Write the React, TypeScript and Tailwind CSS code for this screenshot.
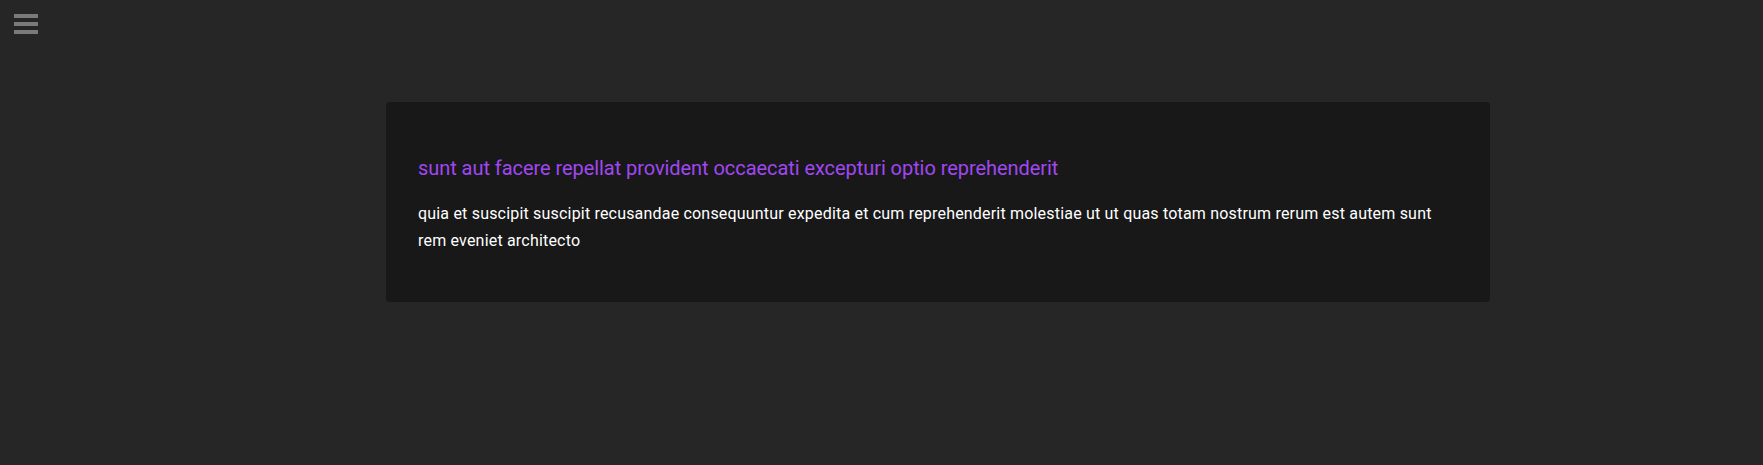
export default function App() {
  return (
    <div className="min-h-[465px] w-full bg-[#262626]" style={{ fontFamily: "Roboto, 'Liberation Sans', sans-serif" }}>
      <div className="flex h-[48px] items-start pl-[14px] pt-[14px]">
        <button className="flex flex-col gap-[4px]" aria-label="menu">
          <span className="block h-[4px] w-[24px] bg-[#7a7a7a]" />
          <span className="block h-[4px] w-[24px] bg-[#7a7a7a]" />
          <span className="block h-[4px] w-[24px] bg-[#7a7a7a]" />
        </button>
      </div>
      <div className="ml-[386px] mt-[54px] w-[1104px] rounded bg-[#181818] px-8 pb-[48px] pt-[52px]">
        <h2 className="text-[20px] leading-[28px] tracking-[-0.06px] text-[#a147f2]">
          sunt aut facere repellat provident occaecati excepturi optio reprehenderit
        </h2>
        <p className="mt-[18px] text-[16px] leading-[27px] tracking-[0.19px] text-white">
          <span className="block whitespace-nowrap">
            quia et suscipit suscipit recusandae consequuntur expedita et cum reprehenderit molestiae ut ut quas totam nostrum rerum est autem sunt
          </span>
          <span className="block whitespace-nowrap">rem eveniet architecto</span>
        </p>
      </div>
    </div>
  );
}
